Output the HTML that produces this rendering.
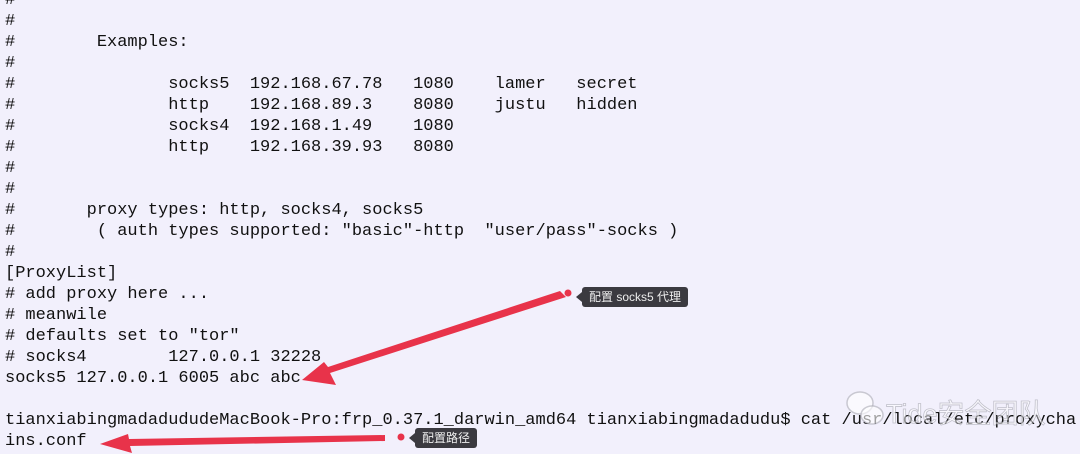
<!DOCTYPE html>
<html><head><meta charset="utf-8"><style>
html,body{margin:0;padding:0;width:1080px;height:454px;overflow:hidden;background:#f2f0fc;}
pre{position:absolute;left:5px;top:-10px;margin:0;font-family:"Liberation Mono",monospace;font-size:17px;line-height:21px;color:#111;}
.tip{position:absolute;background:#3b3a40;color:#eee;font-family:"Liberation Sans","Noto Sans CJK SC",sans-serif;font-size:12px;border-radius:3px;padding:0 7px;height:20px;line-height:20px;}
.tip:before{content:"";position:absolute;left:-6px;top:5px;border-right:6px solid #3b3a40;border-top:5px solid transparent;border-bottom:5px solid transparent;}
.wm{position:absolute;left:886px;top:392px;font-family:"Liberation Sans","Noto Sans CJK SC",sans-serif;font-size:27px;color:rgba(255,255,255,0.55);-webkit-text-stroke:0.8px rgba(150,150,160,0.55);}
</style></head><body>
<pre>#
#
#        Examples:
#
#               socks5  192.168.67.78   1080    lamer   secret
#               http    192.168.89.3    8080    justu   hidden
#               socks4  192.168.1.49    1080
#               http    192.168.39.93   8080
#
#
#       proxy types: http, socks4, socks5
#        ( auth types supported: "basic"-http  "user/pass"-socks )
#
[ProxyList]
# add proxy here ...
# meanwile
# defaults set to "tor"
# socks4        127.0.0.1 32228
socks5 127.0.0.1 6005 abc abc

tianxiabingmadadududeMacBook-Pro:frp_0.37.1_darwin_amd64 tianxiabingmadadudu$ cat /usr/local/etc/proxycha
ins.conf</pre>
<svg width="1080" height="454" style="position:absolute;left:0;top:0">
<g fill="none" stroke="rgba(170,170,180,0.6)" stroke-width="1.5">
<ellipse cx="860" cy="403" rx="13" ry="11" fill="rgba(255,255,255,0.6)"/>
<ellipse cx="872" cy="415" rx="11" ry="9" fill="rgba(255,255,255,0.6)"/>
</g>
<polygon points="560,291 566,297 330,373 336,385 302,380 324,362 328,367" fill="#e8334a"/>
<circle cx="568" cy="293" r="3.5" fill="#e8334a"/>
<polygon points="385,435 385,441 130,446 132,453 100,444 128,434 129,439" fill="#e8334a"/>
<circle cx="401" cy="437" r="3.5" fill="#e8334a"/>
</svg>
<div class="wm">Tide安全团队</div>
<div class="tip" style="left:582px;top:287px">配置 socks5 代理</div>
<div class="tip" style="left:415px;top:428px">配置路径</div>
</body></html>
